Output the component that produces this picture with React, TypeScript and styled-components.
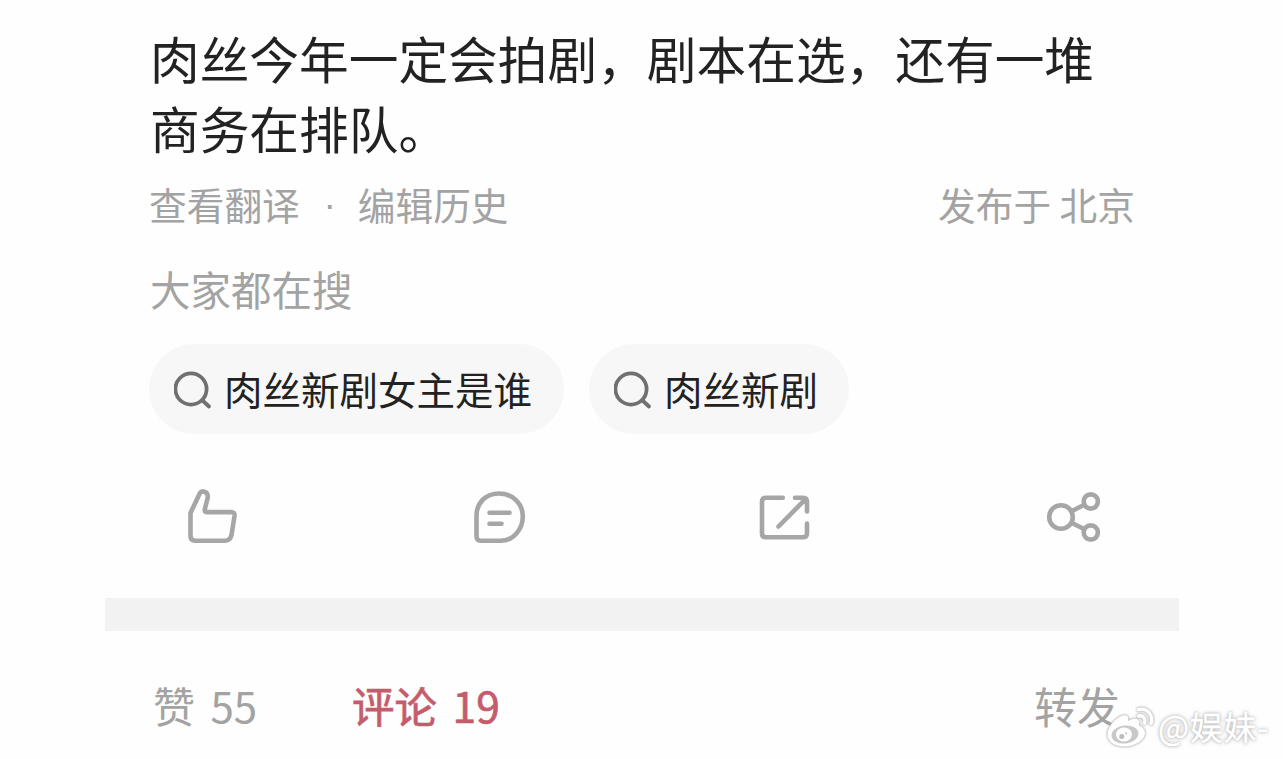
import React from "react";
import styled, { createGlobalStyle } from "styled-components";

const GlobalStyle = createGlobalStyle`
  * { box-sizing: border-box; }
  body {
    margin: 0;
    background: #fefefe;
    font-family: "Noto Sans CJK SC", "Noto Sans", sans-serif;
    overflow: hidden;
  }
`;

const Page = styled.main`
  position: relative;
  width: 1283px;
  height: 759px;
  padding-top: 22px;
  overflow: hidden;
  background: #fefefe;
`;

const Post = styled.article`
  display: flex;
  flex-direction: column;
  height: 576px;
  padding: 0 148px 0 149px;
`;

const Body = styled.p`
  margin: 0 0 0 1px;
  font-size: 49.7px;
  line-height: 70px;
  color: #222;
  white-space: nowrap;
`;

const Meta = styled.div`
  display: flex;
  justify-content: space-between;
  margin-top: 17px;
  font-size: 37.7px;
  line-height: 50px;
  color: #a3a3a3;
  white-space: nowrap;
`;

const MetaLinks = styled.div`
  display: flex;
`;

const Dot = styled.span`
  width: 58px;
  padding-left: 2px;
  text-align: center;
  font-family: "Liberation Sans", sans-serif;
`;

const SearchTitle = styled.h2`
  margin: 35px 0 0 1px;
  font-size: 40.5px;
  font-weight: 400;
  line-height: 50px;
  color: #a3a3a3;
`;

const Chips = styled.div`
  display: flex;
  gap: 25px;
  margin-top: 30px;
`;

const Chip = styled.button<{ $width: number }>`
  display: flex;
  align-items: center;
  gap: 10px;
  width: ${(p) => p.$width}px;
  height: 90px;
  padding: 0 0 0 25px;
  border: 0;
  border-radius: 45px;
  background: #f7f7f7;
  color: #222;
  font: inherit;
  font-size: 38.5px;
  line-height: 50px;
  white-space: nowrap;
`;

const ChipLabel = styled.span`
  margin-top: -2px;
`;

const Actions = styled.div`
  display: flex;
  justify-content: space-between;
  margin: 51px 33px 0 34px;
`;

const Icon = styled.svg<{ $stroke?: number; $color?: string }>`
  display: block;
  flex: none;
  fill: none;
  stroke: ${(p) => p.$color ?? "#a6a6a6"};
  stroke-width: ${(p) => p.$stroke ?? 4.6};
  stroke-linecap: round;
  stroke-linejoin: round;
`;

const Divider = styled.div`
  width: 1074px;
  height: 33px;
  margin-left: 105px;
  background: #f2f2f2;
`;

const Tabs = styled.nav`
  display: flex;
  padding: 43px 163px 0 153px;
  line-height: 62px;
  white-space: nowrap;
`;

const Tab = styled.span<{ $active?: boolean; $size?: number }>`
  font-size: ${(p) => p.$size ?? 42}px;
  -webkit-text-stroke: ${(p) => (p.$active ? "0.7px #c45c6c" : "0")};
  color: ${(p) => (p.$active ? "#c45c6c" : "#a3a3a3")};
  word-spacing: 6px;
  margin-right: ${(p) => (p.$active ? "auto" : "95px")};
  &:last-child { margin-right: 0; }
`;

const Watermark = styled.div`
  position: absolute;
  left: 1103px;
  top: 702px;
  display: flex;
  align-items: center;
  gap: 4px;
  color: #fff;
  font-size: 33px;
  line-height: 48px;
  letter-spacing: 0.6px;
  white-space: nowrap;
  -webkit-text-stroke: 0.4px #fff;
  text-shadow: 0 0 2px #aaa, 0 0 4px #aaa;
`;

const WeiboMark = styled.svg`
  display: block;
  filter: drop-shadow(0 0 1px #aaa) drop-shadow(0 0 1px #ccc);
`;

const SearchIcon = () => (
  <Icon width="40" height="44" viewBox="0 0 40 44" $stroke={3.8} $color="#707070">
    <circle cx="17" cy="22" r="15.6" />
    <path d="M28.500 33.500 35 39.500" />
  </Icon>
);

const LikeIcon = () => (
  <Icon width="56" height="60" viewBox="0 0 56 60">
    <path d="M7.5 28 16.800 8.200C19 4.800 25.300 6.800 24.800 12.200L21.800 24.300C21.500 26 22 27.100 23.500 27.100H48Q52 27.100 51.500 31L48.500 50Q47.300 55.700 41.500 55.700H12Q7.500 55.700 7.500 51Z" />
  </Icon>
);

const CommentIcon = () => (
  <Icon width="56" height="60" viewBox="0 0 56 60">
    <path d="M5.5 31C5.5 17 15.2 8.5 28.3 8.5C41.5 8.5 51.8 18.5 51.8 31.5C51.8 43 43.5 55.7 30 55.7H9.5Q5.5 55.7 5.5 51.5Z" />
    <path d="M18.500 27.700H38.500M18.500 38.700H30.500" />
  </Icon>
);

const ForwardIcon = () => (
  <Icon width="56" height="60" viewBox="0 0 56 60">
    <path d="M24.8 12.7H8Q4 12.7 4 16.7V48.3Q4 52.3 8 52.3H45Q49 52.3 49 48.3V38.5M37 12.7H45Q49 12.7 49 16.7V26.5M47 14.7 20.5 41.5" />
  </Icon>
);

const ShareIcon = () => (
  <Icon width="56" height="60" viewBox="0 0 56 60">
    <circle cx="15" cy="32" r="11.8" />
    <circle cx="44.8" cy="16.500" r="7.1" />
    <circle cx="44.8" cy="47.500" r="7.1" />
    <path d="M26 26 38.300 19.700M26 38 38 44" />
  </Icon>
);

export default function App() {
  return (
    <>
      <GlobalStyle />
      <Page>
        <Post>
          <Body>
            肉丝今年一定会拍剧，剧本在选，还有一堆
            <br />
            商务在排队。
          </Body>
          <Meta>
            <MetaLinks>
              <span>查看翻译</span>
              <Dot>·</Dot>
              <span>编辑历史</span>
            </MetaLinks>
            <span>发布于 北京</span>
          </Meta>
          <SearchTitle>大家都在搜</SearchTitle>
          <Chips>
            <Chip $width={415}>
              <SearchIcon />
              <ChipLabel>肉丝新剧女主是谁</ChipLabel>
            </Chip>
            <Chip $width={260}>
              <SearchIcon />
              <ChipLabel>肉丝新剧</ChipLabel>
            </Chip>
          </Chips>
          <Actions>
            <LikeIcon />
            <CommentIcon />
            <ForwardIcon />
            <ShareIcon />
          </Actions>
        </Post>
        <Divider />
        <Tabs>
          <Tab>赞 55</Tab>
          <Tab $active $size={42.5}>评论 19</Tab>
          <Tab $size={43}>转发</Tab>
        </Tabs>
        <Watermark>
          <WeiboMark width="51" height="48" viewBox="0 0 51 48">
            <path
              fill="#fff"
              d="M4.500 32.500C4.500 25 13 15 20 13.500C24.500 12.500 26 15 25 19C31 15.500 37.500 16 36 22.500C36 24.500 42 25 42 31C42 38 32 44.500 21.500 44.500C12 44.500 4.500 40 4.500 32.500Z"
            />
            <ellipse cx="22" cy="32.500" rx="13.500" ry="9" fill="#c9c9c9" transform="rotate(-7 22 32.500)" />
            <ellipse cx="21" cy="32.500" rx="8" ry="7" fill="#fff" />
            <circle cx="18.800" cy="34.500" r="2.500" fill="#bbb" />
            <circle cx="23" cy="31.200" r="1" fill="#bbb" />
            <path
              d="M35.500 7.500C44 5.500 51 13 48 21.500M35.500 14C40 13 43 16.500 41.500 21"
              fill="none"
              stroke="#fff"
              strokeWidth="3.400"
              strokeLinecap="round"
            />
          </WeiboMark>
          <span>@娱妹-</span>
        </Watermark>
      </Page>
    </>
  );
}
